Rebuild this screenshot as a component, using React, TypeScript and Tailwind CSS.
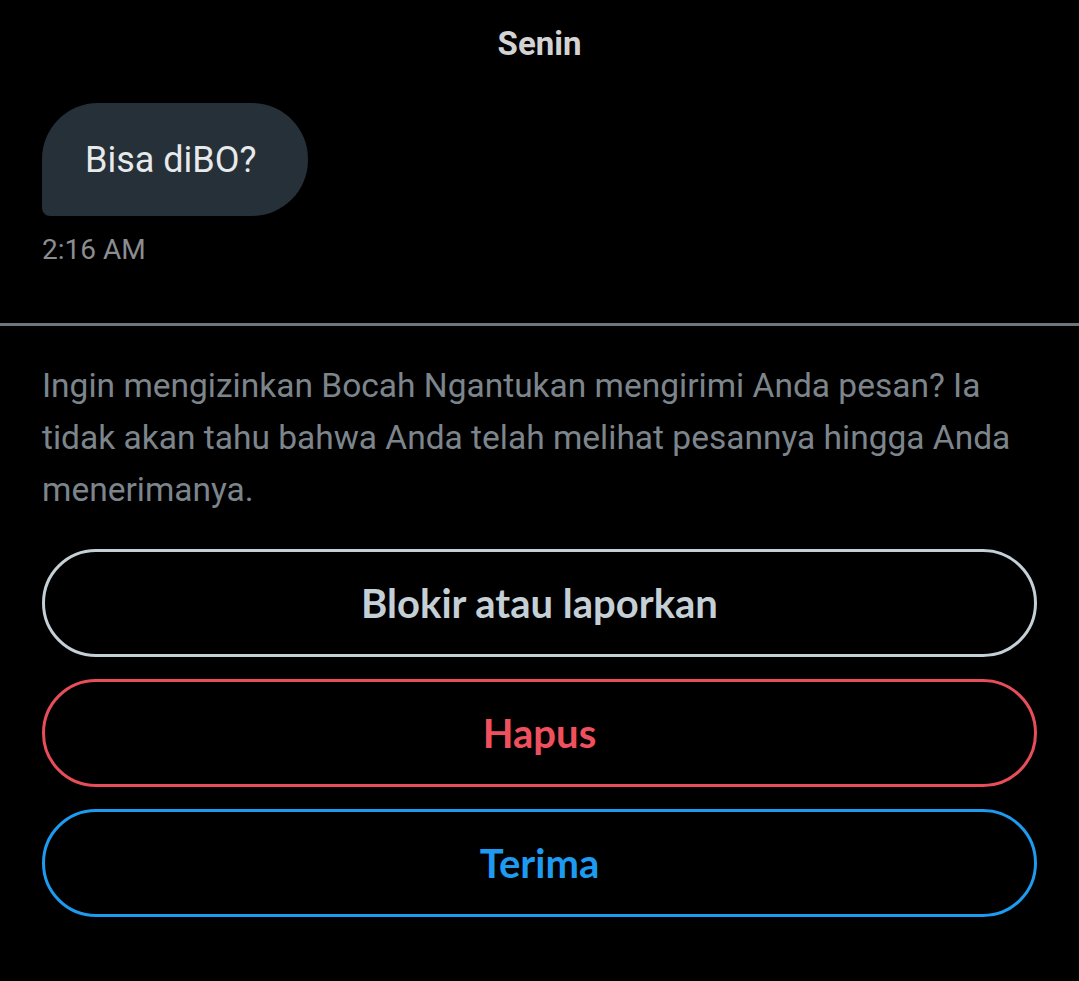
export default function App() {
  return (
    <div className="min-h-[981px] w-full bg-black font-['Roboto',sans-serif]">
      <div className="px-[42px] pt-[24px]">
        <div className="text-center text-[33px] font-bold leading-[40px] text-[#d3d3d3]">Senin</div>

        <div className="mt-[39px] flex">
          <div className="flex h-[113px] w-[266px] items-center rounded-[56px] rounded-bl-[8px] bg-[#253038] pl-[43px] text-[36px] text-[#e7e9ea]">
            Bisa diBO?
          </div>
        </div>

        <div className="mt-[17px] text-[28px] leading-[34px] text-[#8b8d90]">2:16 AM</div>
      </div>

      <div className="mt-[56px] h-[3px] w-full bg-[#6e767d]" />

      <div className="px-[42px]">
        <p className="mt-[34px] text-[33.5px] leading-[52px] text-[#7d858c]">
          Ingin mengizinkan Bocah Ngantukan mengirimi Anda pesan? Ia tidak akan tahu bahwa Anda telah melihat pesannya
          hingga Anda menerimanya.
        </p>

        <div className="mt-[33px] flex flex-col gap-[22px] font-['Lato',sans-serif] text-[40px] font-bold">
          <button className="flex h-[108px] w-full items-center justify-center rounded-full border-[3px] border-[#c4cfd6] text-[#c4cfd6]">
            Blokir atau laporkan
          </button>
          <button className="flex h-[108px] w-full items-center justify-center rounded-full border-[3px] border-[#e84d5a] text-[#f0505e]">
            Hapus
          </button>
          <button className="flex h-[108px] w-full items-center justify-center rounded-full border-[3px] border-[#1d9bf0] text-[#1d9bf0]">
            Terima
          </button>
        </div>
      </div>
    </div>
  );
}
